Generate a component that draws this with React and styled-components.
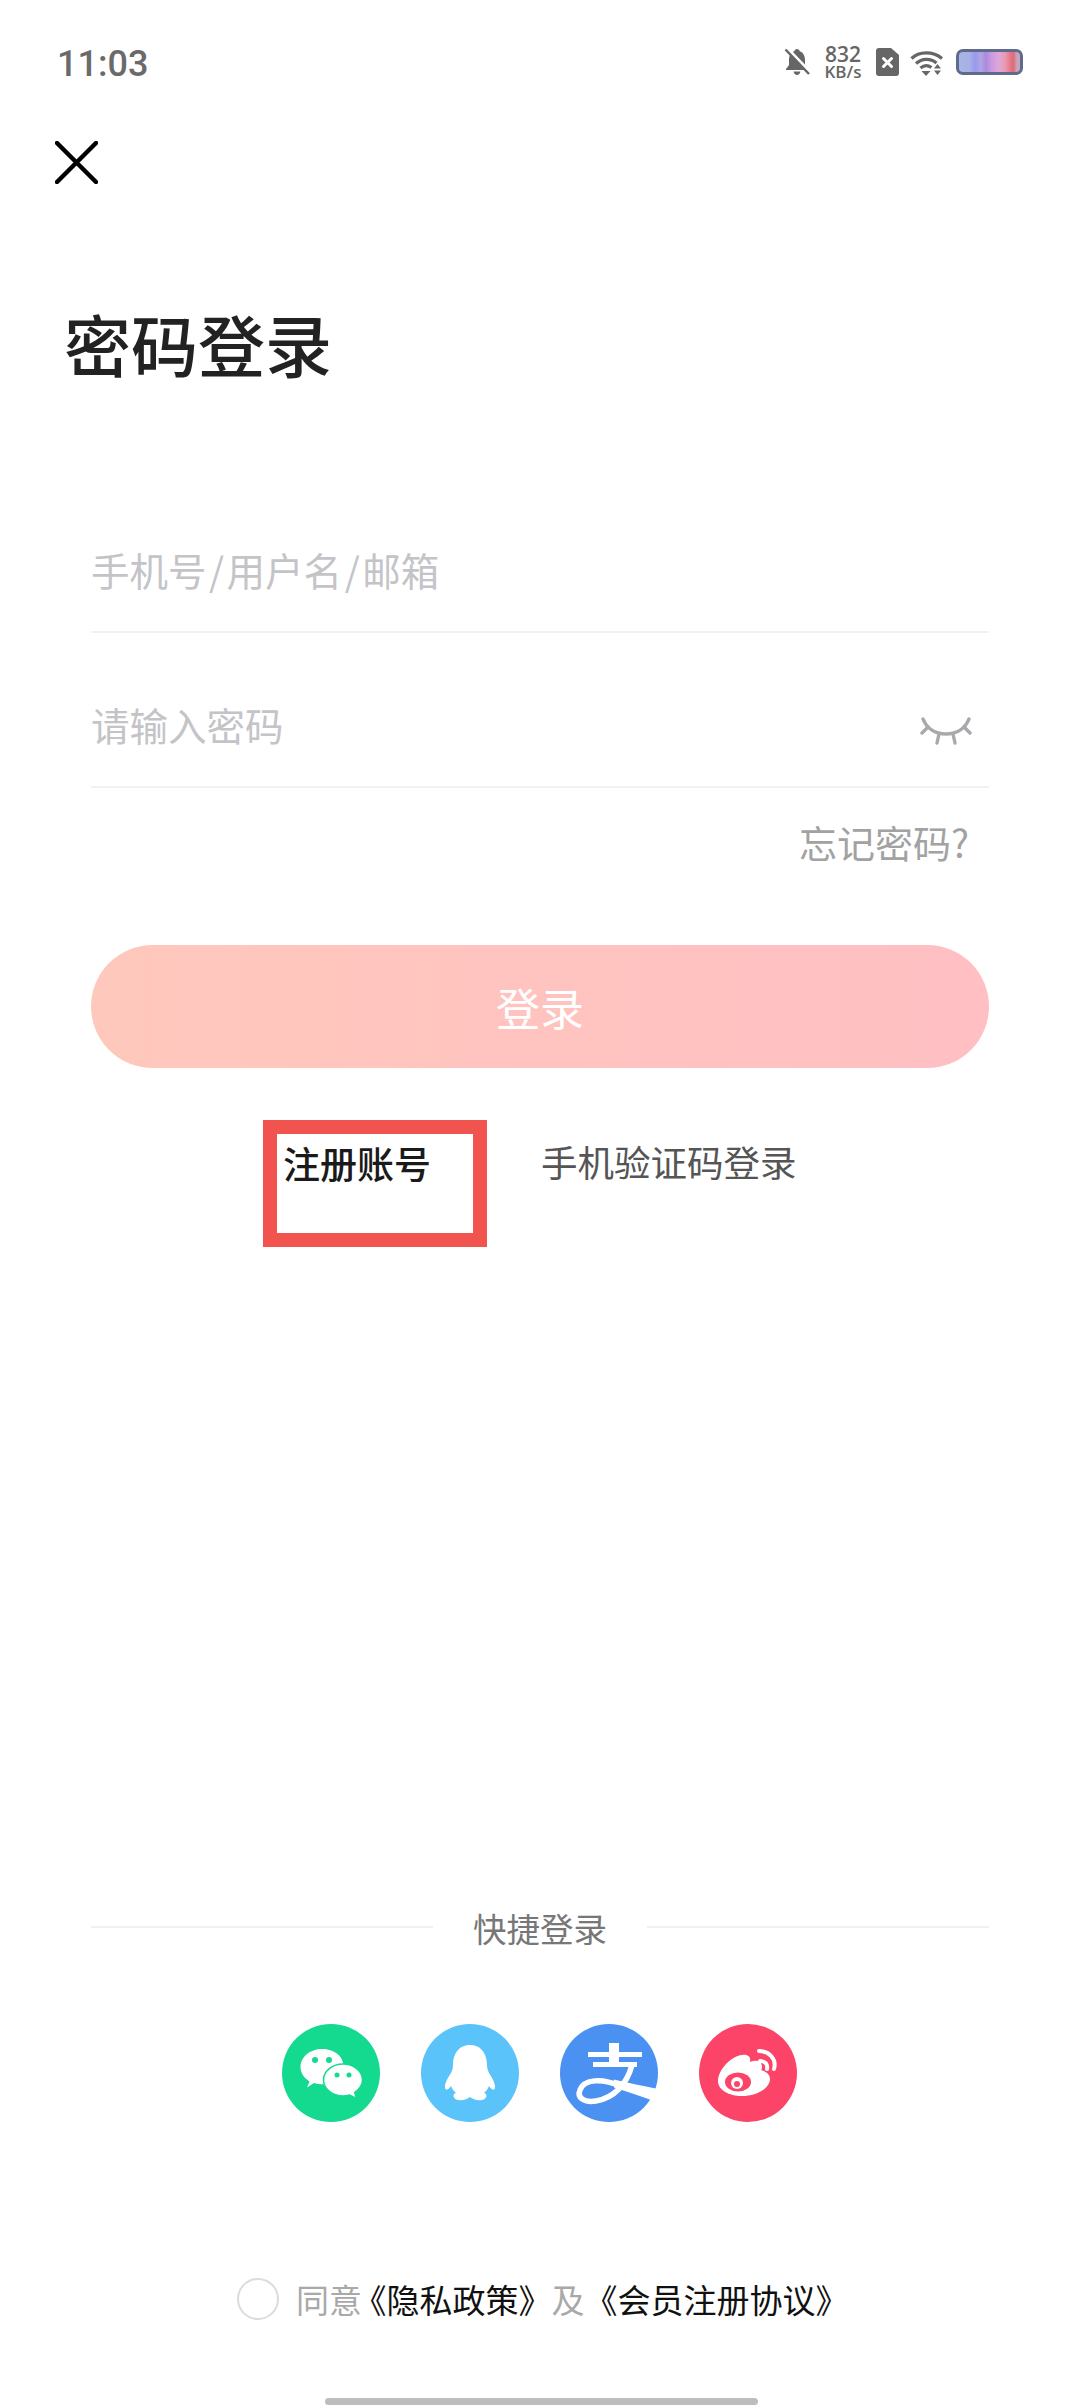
import React from "react";
import styled, { createGlobalStyle } from "styled-components";

const Global = createGlobalStyle`
  html, body { margin: 0; padding: 0; background: #fff; }
  body { font-family: "Noto Sans CJK SC", "Noto Sans", sans-serif; }
  * { box-sizing: border-box; }
`;

const Page = styled.div`
  width: 1080px;
  height: 2408px;
  background: #fff;
  overflow: hidden;
  display: flex;
  flex-direction: column;
`;

const StatusBar = styled.div`
  height: 124px;
  padding: 0 57px;
  display: flex;
  align-items: center;
  justify-content: space-between;
  color: #666;
`;

const Time = styled.div`
  margin-top: 3px;
  font-family: Roboto, "Liberation Sans", sans-serif;
  font-size: 36px;
  line-height: 40px;
  font-weight: 500;
  color: #6a6a6a;
`;

const StatusIcons = styled.div`
  display: flex;
  align-items: center;
`;

const Speed = styled.div`
  margin: 0 15px;
  width: 36px;
  display: flex;
  flex-direction: column;
  align-items: center;
  font-family: "Open Sans", "Noto Sans", sans-serif;
  font-weight: 600;
  color: #666;
  span:first-child { font-size: 21px; line-height: 18px; }
  span:last-child { font-size: 17px; line-height: 17px; white-space: nowrap; }
`;

const Battery = styled.div`
  margin-left: 12px;
  width: 67px;
  height: 26px;
  border: 3px solid #5f6b8c;
  border-radius: 7px;
  background: linear-gradient(90deg, #a9b6e2 0%, #a4b0e6 18%, #9a98ee 26%, #b0a6e6 36%, #a98ade 44%, #cf9ade 54%, #dea7d8 66%, #e89ab0 76%, #e46f7e 86%, #d9707c 90%, #c8a0b4 94%, #c8a8be 100%);
`;

const CloseButton = styled.div`
  margin: 17px 0 0 55px;
  width: 43px;
  height: 43px;
  display: flex;
`;

const Title = styled.h1`
  margin: 114px 0 0 64px;
  font-size: 67px;
  line-height: 90px;
  font-weight: 500;
  color: #222;
`;

const Form = styled.div`
  margin-top: 90px;
  padding: 0 91px;
  display: flex;
  flex-direction: column;
`;

const Field = styled.div`
  height: 155px;
  padding: 28px 17px 0 0;
  border-bottom: 2px solid #f1f1f2;
  display: flex;
  align-items: center;
  justify-content: space-between;
`;

const Placeholder = styled.span`
  font-size: 38.5px;
  line-height: 50px;
  font-weight: 400;
  color: #c4c4c8;
`;

const Slash = styled.span`
  margin: 0 2.5px;
`;

const EyeSlot = styled.div`
  margin-top: 14px;
`;

const Forgot = styled.div`
  margin-top: 29px;
  padding-right: 20px;
  text-align: right;
  font-size: 38px;
  line-height: 50px;
  font-weight: 400;
  color: #a2a2a2;
`;

const LoginButton = styled.div`
  margin-top: 78px;
  height: 123px;
  border-radius: 62px;
  background: linear-gradient(90deg, #ffc8bc, #ffbfc3);
  color: #fff;
  display: flex;
  align-items: center;
  justify-content: center;
  font-size: 44px;
  font-weight: 400;
`;

const LinkRow = styled.div`
  margin-top: 52px;
  padding-left: 263px;
  display: flex;
  align-items: flex-start;
`;

const Highlight = styled.div`
  width: 224px;
  height: 127px;
  border: 14px solid #f1534e;
  padding-left: 6px;
  font-size: 37px;
  line-height: 58px;
  font-weight: 500;
  color: #1a1a1a;
  white-space: nowrap;
`;

const PhoneLink = styled.div`
  margin: 14px 0 0 54px;
  font-size: 36.5px;
  line-height: 56px;
  font-weight: 400;
  color: #555;
`;

const Divider = styled.div`
  margin: 655px 91px 0;
  height: 50px;
  display: flex;
  align-items: center;
  justify-content: space-between;
  font-size: 33.5px;
  font-weight: 400;
  color: #777;
  &::before, &::after {
    content: "";
    width: 342px;
    height: 2px;
    background: #f1f1f2;
  }
`;

const Socials = styled.div`
  margin-top: 72px;
  padding-right: 2px;
  display: flex;
  justify-content: center;
  gap: 41px;
`;

const Social = styled.svg`
  width: 98px;
  height: 98px;
  display: block;
`;

const Agreement = styled.div`
  margin-top: 156px;
  padding-left: 237px;
  height: 42px;
  display: flex;
  align-items: center;
`;

const AgreementText = styled.div`
  margin-top: -1px;
  font-size: 33px;
  line-height: 50px;
  white-space: nowrap;
`;

const Radio = styled.div`
  width: 42px;
  height: 42px;
  border: 2px solid #dcdcdc;
  border-radius: 50%;
  margin-right: 17px;
  flex: none;
`;

const Muted = styled.span`
  color: #a9a9a9;
  font-weight: 400;
`;

const Strong = styled.span`
  color: #111;
  font-weight: 400;
`;

const TightBracket = styled.span`
  font-feature-settings: "halt";
  margin-left: 8px;
`;

const HomeBar = styled.div`
  margin: 78px 0 0 325px;
  width: 433px;
  height: 7px;
  border-radius: 4px;
  background: #bdbdbd;
`;

const BellOff = () => (
  <svg width="26" height="28" viewBox="0 0 26 28" style={{ display: "block" }}>
    <path d="M13 1c1.500 0 2.500 1 2.600 2.200C19.500 4.500 21 8 21 12v5l3 4v1H2v-1l3-4v-5c0-4 1.500-7.500 5.400-8.800C10.500 2 11.500 1 13 1z" fill="#666" />
    <path d="M9.500 23.500h7c-.4 2-1.800 3.500-3.500 3.500s-3.100-1.500-3.500-3.500z" fill="#666" />
    <path d="M3.500 0.500 L27 25" stroke="#fff" strokeWidth="3" />
    <path d="M1.500 1.500 L25 26" stroke="#666" strokeWidth="2.500" />
  </svg>
);

const Sim = () => (
  <svg width="23" height="28" viewBox="0 0 23 28" style={{ display: "block" }}>
    <path d="M3 0h12l8 7v18a3 3 0 0 1-3 3H3a3 3 0 0 1-3-3V3a3 3 0 0 1 3-3z" fill="#666" />
    <path d="M7.500 10.500l8 8M15.500 10.500l-8 8" stroke="#fff" strokeWidth="3" strokeLinecap="round" />
  </svg>
);

const Wifi = () => (
  <svg width="34" height="27" viewBox="0 0 34 27" style={{ marginLeft: 11, display: "block" }}>
    <g fill="none" stroke="#666" strokeWidth="3.200">
      <path d="M1.500 9.500C9 2 23 2 32 9.500" />
      <path d="M6 14.500C12 9 20.500 9 26.500 14" />
      <path d="M10.500 19C14 16 18 16 21.500 18.500" />
    </g>
    <path d="M11.500 22h9L16 27z" fill="#666" />
    <path d="M27.500 15l3.500 4.500h-7zM24 21.500h7L27.500 26z" fill="#666" />
  </svg>
);

const CloseIcon = () => (
  <svg width="43" height="43" viewBox="0 0 43 43">
    <path d="M2 2L41 41M41 2L2 41" stroke="#000" strokeWidth="4.500" strokeLinecap="round" />
  </svg>
);

const EyeClosed = () => (
  <svg width="52" height="28" viewBox="0 0 52 28" style={{ display: "block" }}>
    <g fill="none" stroke="#a9a9ad" strokeWidth="3.400" strokeLinecap="round">
      <path d="M3 2C7 12 16 17 26 17S45 12 49 2" />
      <path d="M8 10L2 16" />
      <path d="M44 10L50 16" />
      <path d="M19 17L17 26" />
      <path d="M33 17L35 26" />
    </g>
  </svg>
);

const WeChat = () => (
  <Social viewBox="0 0 98 98">
    <circle cx="49" cy="49" r="49" fill="#13da8e" />
    <path d="M40 25C28 25 18.500 33 18.500 43c0 6 3.500 11 9 14.500L25 63.500l7-4.500c2.500.8 5.200 1.200 8 1.200 12 0 21.500-8 21.500-18S52 25 40 25z" fill="#fff" />
    <circle cx="33" cy="36" r="3" fill="#13da8e" />
    <circle cx="47" cy="36" r="3" fill="#13da8e" />
    <path d="M61 40c-10.500 0-19.500 7-19.500 16S50.500 72 61 72c2.400 0 4.500-.3 6.500-1l7 3.500-1.800-6C77 65.500 80.500 61 80.500 56 80.500 47 71.500 40 61 40z" fill="#fff" stroke="#13da8e" strokeWidth="1.500" />
    <circle cx="55" cy="51" r="2.500" fill="#13da8e" />
    <circle cx="67" cy="51" r="2.500" fill="#13da8e" />
  </Social>
);

const QQ = () => (
  <Social viewBox="0 0 98 98">
    <circle cx="49" cy="49" r="49" fill="#5ac4fa" />
    <path d="M49 21C37 21 32 31 32 41C32 44 31 47 30 49C27 54 24 58 24 63C24 65 25 66 26 65.500C28 65 29 63 30 62C31 65 33 67 35 69C31 70 32 75 37 76C42 77 46 75 49 73C52 75 56 77 61 76C66 75 67 70 63 69C65 67 67 65 68 62C69 63 70 65 72 65.500C73 66 74 65 74 63C74 58 71 54 68 49C67 47 66 44 66 41C66 31 61 21 49 21Z" fill="#fff" />
  </Social>
);

const Alipay = () => (
  <Social viewBox="0 0 98 98" style={{ overflow: "visible" }}>
    <circle cx="49" cy="49" r="49" fill="#4a91f2" />
    <rect x="49" y="19" width="10" height="20" fill="#fff" />
    <rect x="28" y="28" width="54" height="5" fill="#fff" />
    <rect x="33" y="38" width="44" height="5" fill="#fff" />
    <path d="M72 41C67 60 54 74 36 77C23 79 17 73 20 66C24 55 42 54 60 62" fill="none" stroke="#fff" strokeWidth="5.500" />
    <path d="M54 55.500C68 59 84 62 98 65L99 79C84 73 68 68 54 63.500Z" fill="#fff" />
  </Social>
);

const Weibo = () => (
  <Social viewBox="0 0 98 98">
    <circle cx="49" cy="49" r="49" fill="#fb4468" />
    <path d="M19 57C19 46 32 32 43 31C50 30 52 34 51 38C56 36 62 36 63 42C63 44 63 45 62 46C68 48 71 51 71 55C71 64 58 72 43 72C30 72 19 66 19 57Z" fill="#fff" />
    <ellipse cx="39" cy="58" rx="13" ry="9.500" fill="#fb4468" />
    <circle cx="38" cy="59" r="6" fill="#fff" />
    <circle cx="38" cy="60" r="3" fill="#fb4468" />
    <path d="M60 27C70 27 78 35 75 45M61 37C66 37 69 40 68 45" fill="none" stroke="#fff" strokeWidth="4" strokeLinecap="round" />
  </Social>
);

export default function App() {
  return (
    <Page>
      <Global />
      <StatusBar>
        <Time>11:03</Time>
        <StatusIcons>
          <BellOff />
          <Speed>
            <span>832</span>
            <span>KB/s</span>
          </Speed>
          <Sim />
          <Wifi />
          <Battery />
        </StatusIcons>
      </StatusBar>
      <CloseButton>
        <CloseIcon />
      </CloseButton>
      <Title>密码登录</Title>
      <Form>
        <Field>
          <Placeholder>
            手机号<Slash>/</Slash>用户名<Slash>/</Slash>邮箱
          </Placeholder>
        </Field>
        <Field>
          <Placeholder>请输入密码</Placeholder>
          <EyeSlot>
            <EyeClosed />
          </EyeSlot>
        </Field>
        <Forgot>忘记密码?</Forgot>
        <LoginButton>登录</LoginButton>
      </Form>
      <LinkRow>
        <Highlight>注册账号</Highlight>
        <PhoneLink>手机验证码登录</PhoneLink>
      </LinkRow>
      <Divider>快捷登录</Divider>
      <Socials>
        <WeChat />
        <QQ />
        <Alipay />
        <Weibo />
      </Socials>
      <Agreement>
        <Radio />
        <AgreementText>
          <Muted>同意</Muted>
          <Strong>
            <TightBracket>《</TightBracket>隐私政策》
          </Strong>
          <Muted>及</Muted>
          <Strong>《会员注册协议》</Strong>
        </AgreementText>
      </Agreement>
      <HomeBar />
    </Page>
  );
}
